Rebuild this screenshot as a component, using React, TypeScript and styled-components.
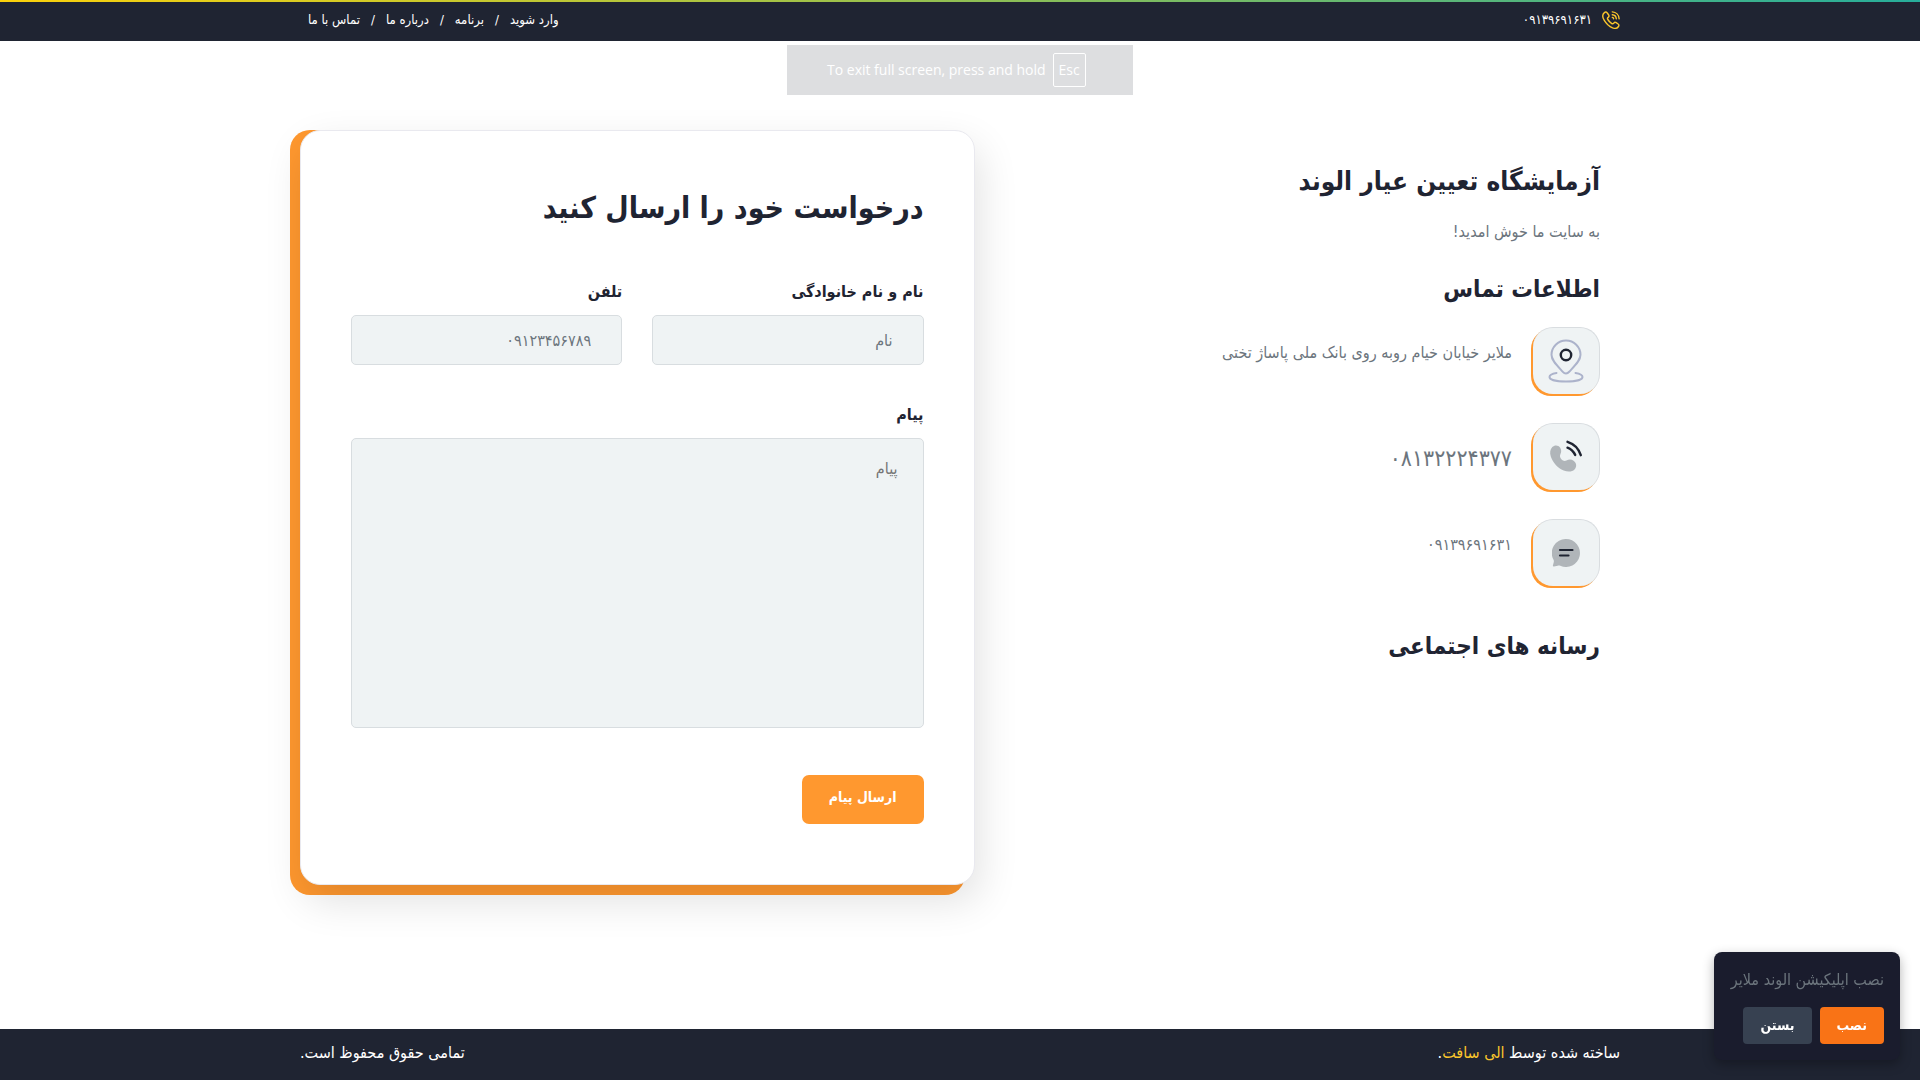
import React from "react";
import styled, { createGlobalStyle } from "styled-components";

const ink = "#1f2432";
const orange = "#ff982f";
const muted = "#6c757d";
const field = "#eff3f4";

const GlobalStyle = createGlobalStyle`
  *, *::before, *::after { box-sizing: border-box; }
  body {
    margin: 0;
    background: #fff;
    color: ${ink};
    font-family: "DejaVu Sans Condensed", "DejaVu Sans", sans-serif;
    font-size: 16px;
    line-height: 24px;
  }
  h1, h2, h3, p, ul { margin: 0; padding: 0; }
  ul { list-style: none; }
  a { color: inherit; text-decoration: none; }
  button, input, textarea { font: inherit; }
`;

const Page = styled.div`
  min-height: 100vh;
  display: flex;
  flex-direction: column;
`;

const Container = styled.div`
  width: 100%;
  max-width: 1344px;
  margin: 0 auto;
  padding: 0 12px;
`;

const TopBar = styled.header`
  background: linear-gradient(to right, #fbd10b, #27ae9b) top / 100% 2px no-repeat ${ink};
  color: #fff;
  font-size: 13px;
`;

const Bar = styled(Container)`
  display: flex;
  justify-content: space-between;
  align-items: center;
`;

const TopRow = styled(Bar)`
  padding-top: 8px;
  padding-bottom: 9px;
`;

const PhoneLink = styled.a`
  display: flex;
  align-items: center;
  gap: 10px;
`;

const Nav = styled.ul`
  display: flex;
  padding: 0 8px;
  li + li::before {
    content: "/";
    margin: 0 11px;
  }
`;

const Main = styled(Container).attrs({ as: "main" })`
  flex: 1;
  display: flex;
  flex-wrap: wrap;
  align-items: flex-start;
  padding-top: 89px;
  padding-bottom: 134px;
`;

const Info = styled.section`
  flex: 1;
  padding: 29px 20px 0;
`;

const SiteTitle = styled.h1`
  font-size: 26px;
  line-height: 44px;
`;

const Welcome = styled.p`
  color: ${muted};
  margin: 17px 0 23px;
`;

const SubTitle = styled.h2`
  font-size: 24px;
  line-height: 44px;
`;

const ContactList = styled.ul`
  display: grid;
  gap: 27px;
  margin: 16px 0 36px;
`;

const ContactItem = styled.li<{ $large?: boolean }>`
  display: flex;
  align-items: ${(p) => (p.$large ? "center" : "flex-start")};
  gap: 19px;
  color: ${muted};
  font-size: ${(p) => (p.$large ? "23px" : "16px")};
  > :last-child { margin-top: ${(p) => (p.$large ? "0" : "14px")}; }
`;

const IconTile = styled.span`
  width: 67px;
  height: 67px;
  margin: 0 0 2px 2px;
  flex: none;
  display: grid;
  place-items: center;
  background: ${field};
  border: solid #d9dde0;
  border-width: 1px 1px 0 0;
  border-radius: 20px;
  box-shadow: -2px 2px 0 ${orange};
`;

const FormCard = styled.form`
  position: relative;
  flex: 0 0 51.1%;
  padding: 49px 50px 60px;
  background: #fff;
  border: 1px solid #e9e9ef;
  border-radius: 20px;
  box-shadow: 4px 16px 40px rgba(0, 0, 0, 0.12);
  &::before {
    content: "";
    position: absolute;
    z-index: -1;
    inset: -1px 9px -11px -11px;
    background: ${orange};
    border-radius: 20px;
  }
`;

const FormTitle = styled.h2`
  font-size: 30px;
  line-height: 56px;
  margin-bottom: 44px;
`;

const Fields = styled.div`
  display: grid;
  grid-template-columns: 1fr 1fr;
  gap: 38px 30px;
`;

const Field = styled.div<{ $wide?: boolean }>`
  grid-column: ${(p) => (p.$wide ? "1 / -1" : "auto")};
  display: flex;
  flex-direction: column;
`;

const Label = styled.label`
  font-size: 16px;
  font-weight: 700;
  line-height: 24px;
  margin-bottom: 11px;
`;

const Input = styled.input`
  width: 100%;
  height: 50px;
  padding: 0 30px;
  color: ${ink};
  background: ${field};
  border: 1px solid #d8dde0;
  border-radius: 5px;
  outline: none;
  text-align: right;
  &::placeholder { color: ${muted}; opacity: 1; }
`;

const Message = styled.textarea`
  width: 100%;
  height: 290px;
  padding: 18px 25px;
  color: ${ink};
  background: ${field};
  border: 1px solid #d8dde0;
  border-radius: 5px;
  outline: none;
  resize: none;
  &::placeholder { color: #757575; opacity: 1; }
`;

const Submit = styled.button`
  margin-top: 47px;
  padding: 10px 27px 15px;
  border: 0;
  border-radius: 7px;
  background: ${orange};
  color: #fff;
  font-size: 14px;
  font-weight: 700;
  cursor: pointer;
`;

const Footer = styled.footer`
  background: ${ink};
  color: #fff;
`;

const FooterRow = styled(Bar)`
  padding-top: 12px;
  padding-bottom: 15px;
  a { color: #fbc62c; }
`;

const FullscreenHint = styled.div`
  position: fixed;
  top: 45px;
  left: 50%;
  transform: translateX(-50%);
  width: 346px;
  height: 50px;
  padding-left: 40px;
  display: flex;
  align-items: center;
  gap: 7px;
  direction: ltr;
  white-space: nowrap;
  background: #dddee0;
  color: #fff;
  font: 14px/20px "Open Sans", sans-serif;
`;

const Key = styled.kbd`
  padding: 6px 5px;
  border: 1px solid #fff;
  border-radius: 2px;
  font: inherit;
`;

const InstallCard = styled.aside`
  position: fixed;
  right: 20px;
  bottom: 20px;
  width: 186px;
  padding: 16px;
  background: #1a1c2d;
  border-radius: 8px;
  box-shadow: 0 4px 12px rgba(0, 0, 0, 0.3);
`;

const InstallText = styled.p`
  color: ${muted};
  margin-bottom: 15px;
  white-space: nowrap;
`;

const Actions = styled.div`
  display: flex;
  gap: 8px;
`;

const ActionButton = styled.button<{ $primary?: boolean }>`
  padding: 6px 17px 7px;
  border: 0;
  border-radius: 4px;
  background: ${(p) => (p.$primary ? "#f97316" : "#374151")};
  color: #fff;
  font-size: 14px;
  font-weight: 700;
  cursor: pointer;
`;

const PhoneOutline = () => (
  <svg width="18" height="18" viewBox="0 0 18 18" fill="none" stroke="#fbc62c" strokeWidth="1.4" strokeLinecap="round" strokeLinejoin="round">
    <path d="M2.4 1.6C.3 3.3.3 6.2 2.3 9.4c2 3.300 5 6.100 8.200 7.400 2.400 1 4.700.6 6-1.300.7-1 .5-1.900-.4-2.500l-1.900-1.300c-.9-.6-1.800-.4-2.400.4-.7.9-1.300 1-2.300.3C7.900 11.300 6.700 9.900 5.800 8.500c-.6-1-.5-1.600.4-2.200.9-.6 1.100-1.400.5-2.300L5.300 2C4.600.9 3.500.7 2.400 1.600z" />
    <path d="M10.300.9c3.800.2 6.600 3 6.800 6.800M10.300 3.700c2.200.2 3.800 1.800 4 4M10.300 6.400c.7.1 1.200.6 1.300 1.300" />
  </svg>
);

const PinIcon = () => (
  <svg width="36" height="44" viewBox="0 0 36 44" fill="none" strokeWidth="2" strokeLinecap="round">
    <path d="M18 34.500c-1.300 0-2.300-.7-3.200-1.700C9 26.500 3.500 21.500 3.500 15.800a14.500 14.300 0 0 1 29 0c0 5.700-5.500 10.700-11.300 17-.9 1-1.900 1.700-3.200 1.700z" stroke="#acb3cb" />
    <path d="M8.500 34c-4 .7-7 2-7 4 0 2.700 6.500 4.500 16.500 4.500s16.500-1.800 16.500-4.500c0-2-3-3.300-7-4" stroke="#acb3cb" />
    <circle cx="18" cy="16" r="5.200" stroke={ink} strokeWidth="2.400" />
  </svg>
);

const CallIcon = () => (
  <svg width="34" height="34" viewBox="0 0 34 34" fill="none">
    <path d="M3.300 7C5.500 4.600 9.500 4.900 11.200 7.700c1.300 2.200 1.300 4.300.2 6.500-.8 1.700-.4 3.400 1 5 1.500 1.600 3.200 2.200 5 1.300 2.600-1.300 5-1.300 7.200.3 3.100 2.200 3.400 6.200.9 8.700-2.300 2.300-6.400 2.800-10.800 1C8.900 28.100 3.900 22.700 1.800 16.500.6 12.800 1.100 9.300 3.300 7z" fill="#b0b5b9" />
    <path d="M18.500 7.700c3.400 1.300 6 3.900 7.700 7.200M18.500 1.800c6.300 2 11.300 7 13.300 13.400" stroke={ink} strokeWidth="2.400" strokeLinecap="round" />
  </svg>
);

const ChatIcon = () => (
  <svg width="28" height="28" viewBox="0 0 28 28" fill="none">
    <path d="M14 0a14 14 0 1 1-5.700 26.800c-1-.4-1.700-.3-2.700-.1L2 27.500c-.9.200-1.300-.3-1.100-1.100l.9-3.500c.2-.8 0-1.500-.4-2.300A14 14 0 0 1 14 0z" fill="#b0b5b9" />
    <path d="M8 11h12.500M8 16.500h8.500" stroke={ink} strokeWidth="2.200" strokeLinecap="round" />
  </svg>
);

export default function App() {
  return (
    <Page dir="rtl" lang="fa">
      <GlobalStyle />
      <TopBar>
        <TopRow>
          <PhoneLink href="tel:09139691631">
            <PhoneOutline />
            <span>۰۹۱۳۹۶۹۱۶۳۱</span>
          </PhoneLink>
          <Nav>
            <li><a href="#login">وارد شوید</a></li>
            <li><a href="#app">برنامه</a></li>
            <li><a href="#about">درباره ما</a></li>
            <li><a href="#contact">تماس با ما</a></li>
          </Nav>
        </TopRow>
      </TopBar>

      <Main>
        <Info>
          <SiteTitle>آزمایشگاه تعیین عیار الوند</SiteTitle>
          <Welcome>به سایت ما خوش امدید!</Welcome>
          <SubTitle>اطلاعات تماس</SubTitle>
          <ContactList>
            <ContactItem>
              <IconTile><PinIcon /></IconTile>
              <p>ملایر خیابان خیام روبه روی بانک ملی پاساژ تختی</p>
            </ContactItem>
            <ContactItem $large>
              <IconTile><CallIcon /></IconTile>
              <a href="tel:08132224377">۰۸۱۳۲۲۲۴۳۷۷</a>
            </ContactItem>
            <ContactItem>
              <IconTile><ChatIcon /></IconTile>
              <a href="sms:09139691631">۰۹۱۳۹۶۹۱۶۳۱</a>
            </ContactItem>
          </ContactList>
          <SubTitle>رسانه های اجتماعی</SubTitle>
        </Info>

        <FormCard onSubmit={(e: React.FormEvent) => e.preventDefault()}>
          <FormTitle>درخواست خود را ارسال کنید</FormTitle>
          <Fields>
            <Field>
              <Label htmlFor="name">نام و نام خانوادگی</Label>
              <Input id="name" type="text" placeholder="نام" />
            </Field>
            <Field>
              <Label htmlFor="phone">تلفن</Label>
              <Input id="phone" type="tel" placeholder="۰۹۱۲۳۴۵۶۷۸۹" />
            </Field>
            <Field $wide>
              <Label htmlFor="message">پیام</Label>
              <Message id="message" placeholder="پیام" />
            </Field>
          </Fields>
          <Submit type="submit">ارسال پیام</Submit>
        </FormCard>
      </Main>

      <Footer>
        <FooterRow>
          <p>ساخته شده توسط <a href="#elisoft">الی سافت</a>.</p>
          <p>تمامی حقوق محفوظ است.</p>
        </FooterRow>
      </Footer>

      <FullscreenHint>
        <span>To exit full screen, press and hold</span>
        <Key>Esc</Key>
      </FullscreenHint>

      <InstallCard>
        <InstallText>نصب اپلیکیشن الوند ملایر</InstallText>
        <Actions>
          <ActionButton type="button" $primary>نصب</ActionButton>
          <ActionButton type="button">بستن</ActionButton>
        </Actions>
      </InstallCard>
    </Page>
  );
}
